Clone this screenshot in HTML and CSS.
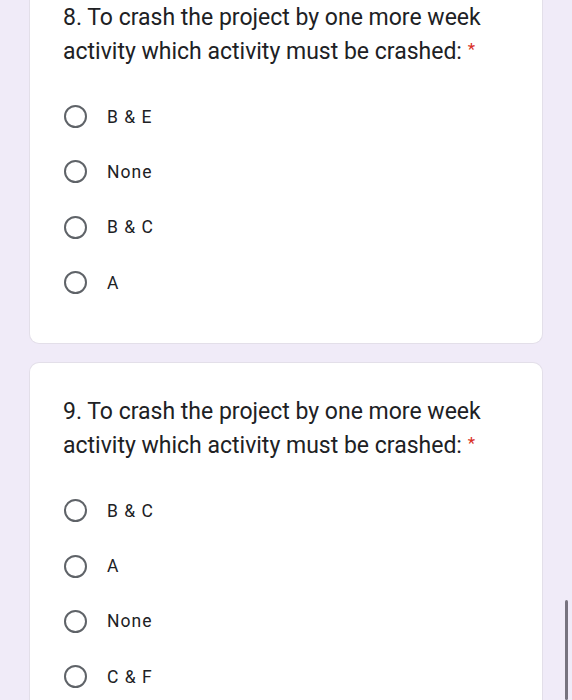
FILE: index.html
```html
<!DOCTYPE html>
<html>
<head>
<meta charset="utf-8">
<link rel="stylesheet" href="styles.css">
</head>
<body>
<div class="form">
  <div class="card">
    <div class="title">8. To crash the project by one more week activity which activity must be crashed: <span class="req">*</span></div>
    <div class="options">
      <div class="opt"><span class="radio"></span><span class="label">B &amp; E</span></div>
      <div class="opt"><span class="radio"></span><span class="label">None</span></div>
      <div class="opt"><span class="radio"></span><span class="label">B &amp; C</span></div>
      <div class="opt"><span class="radio"></span><span class="label">A</span></div>
    </div>
  </div>
  <div class="card">
    <div class="title">9. To crash the project by one more week activity which activity must be crashed: <span class="req">*</span></div>
    <div class="options">
      <div class="opt"><span class="radio"></span><span class="label">B &amp; C</span></div>
      <div class="opt"><span class="radio"></span><span class="label">A</span></div>
      <div class="opt"><span class="radio"></span><span class="label">None</span></div>
      <div class="opt"><span class="radio"></span><span class="label">C &amp; F</span></div>
    </div>
  </div>
</div>
<div class="scrollbar"></div>
</body>
</html>
```

FILE: styles.css
```css
html, body {
  margin: 0;
  padding: 0;
  background: #f0ebf8;
  font-family: Roboto, "Liberation Sans", sans-serif;
  color: #202124;
  overflow: hidden;
}
.form {
  margin-top: -31px;
  padding: 0 30px 0 30px;
  display: flex;
  flex-direction: column;
  gap: 20px;
}
.card {
  background: #fff;
  border-radius: 9px;
  box-shadow: 0 0 0 1px #e3dfe9;
  padding: 32px 24px 33px 33px;
}
.title {
  font-size: 23px;
  line-height: 34px;
  letter-spacing: 0;
}
.req {
  color: #d93025;
  font-size: 17px;
  vertical-align: 4px;
  line-height: 1;
}
.options {
  margin-top: 20px;
  display: flex;
  flex-direction: column;
}
.opt {
  height: 55.3px;
  display: flex;
  align-items: center;
}
.radio {
  width: 19px;
  height: 19px;
  border: 2.5px solid #5f6368;
  border-radius: 50%;
  margin-left: 1px;
  flex: none;
}
.label {
  margin-left: 20px;
  font-size: 17.5px;
  letter-spacing: 1px;
  color: #202124;
}
.scrollbar {
  position: fixed;
  right: 4px;
  top: 600px;
  width: 3px;
  height: 100px;
  background: #77737f;
  border-radius: 2px;
}
```
